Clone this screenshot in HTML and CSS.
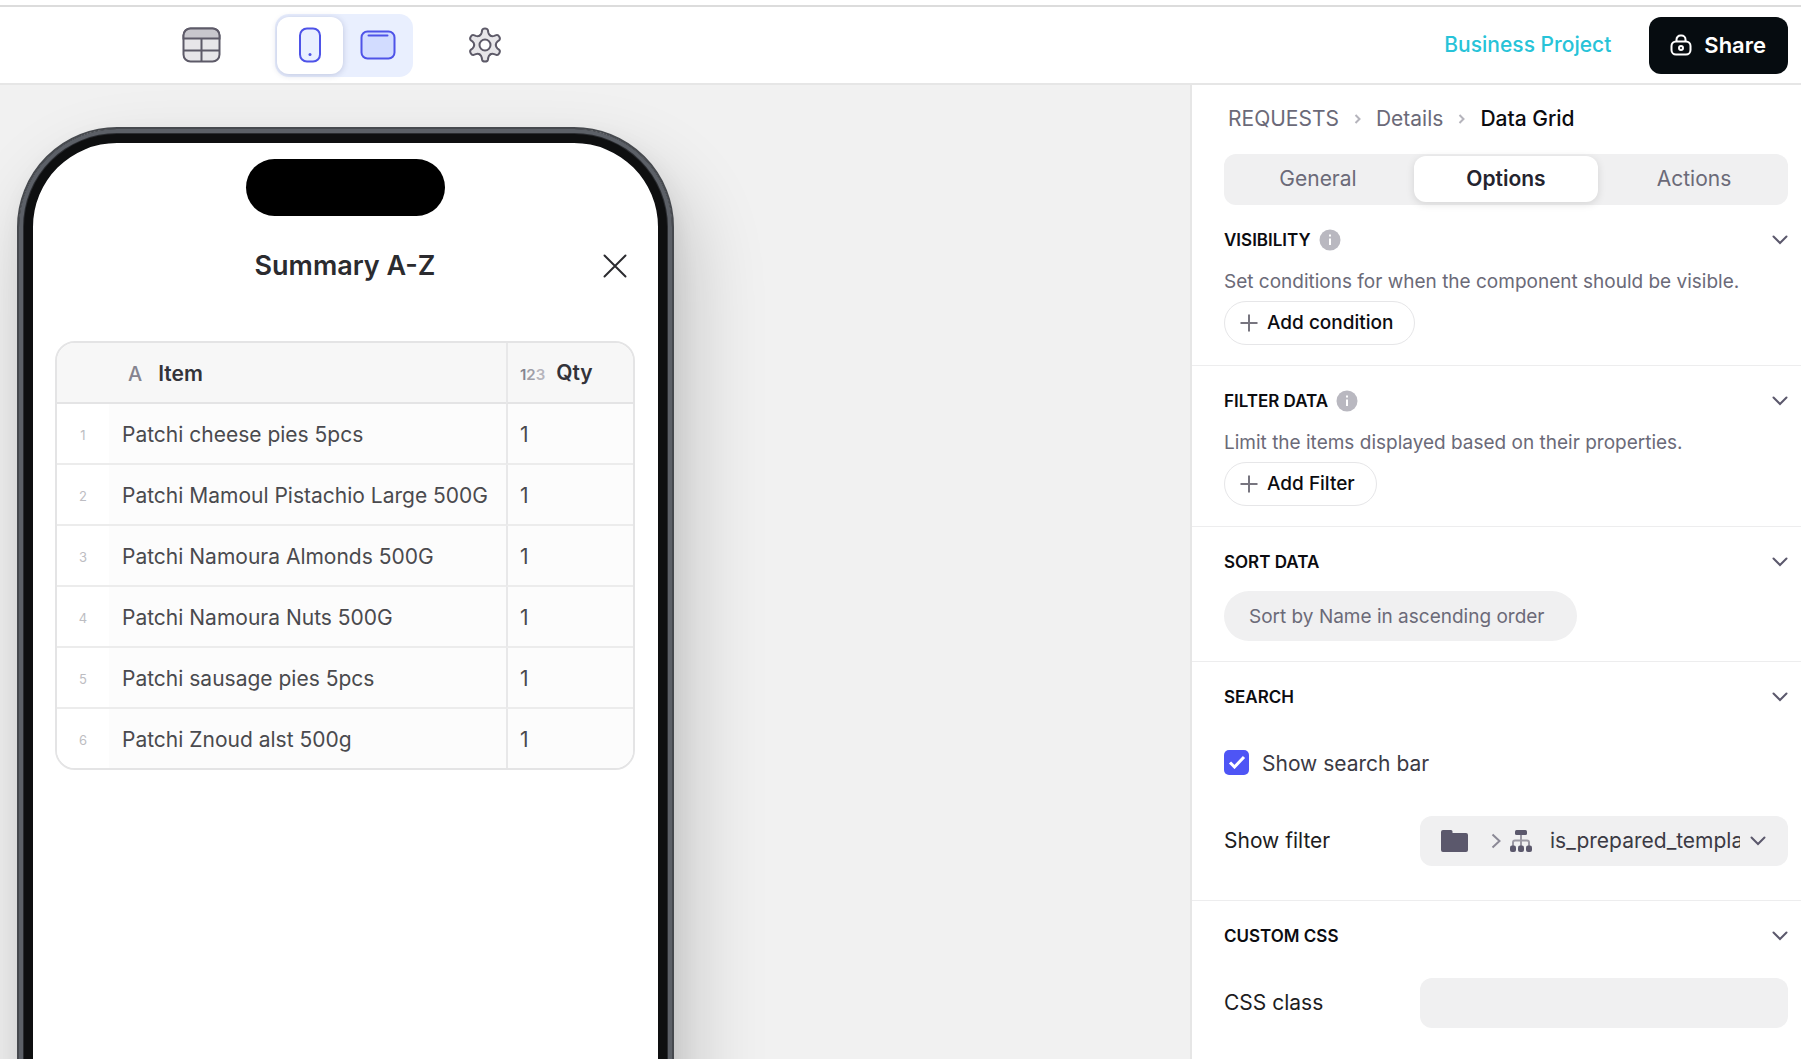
FILE: index.html
```html
<!DOCTYPE html>
<html lang="en">
<head>
  <meta charset="UTF-8">
  <title>Business Project</title>
  <link rel="stylesheet" href="styles.css">
</head>
<body>
  <header class="topbar">
    <div class="tools">
      <button class="icon-btn" aria-label="Data">
        <svg width="39" height="36" viewBox="0 0 39 36" fill="none" stroke="#5d5a68" stroke-width="2">
          <rect x="1.5" y="1.5" width="36" height="33" rx="7" fill="#e7e6e9"/>
          <path d="M1.5 11.5V8.500a7 7 0 0 1 7-7h22a7 7 0 0 1 7 7v3z" fill="#c8c7cd"/>
          <path d="M1.500 23.500h36M19.500 11.500v23"/>
        </svg>
      </button>
      <div class="devices">
        <button class="device active" aria-label="Phone">
          <svg width="22" height="36" viewBox="0 0 22 36" fill="none">
            <rect x="1" y="1.500" width="20" height="33" rx="7" fill="#e9efff" stroke="#4e53e8" stroke-width="2"/>
            <circle cx="11" cy="27.500" r="1.500" fill="#4e53e8"/>
          </svg>
        </button>
        <button class="device" aria-label="Tablet">
          <svg width="36" height="30" viewBox="0 0 36 30" fill="none" stroke="#4e53e8" stroke-width="2">
            <rect x="1.500" y="1.500" width="33" height="27" rx="6" fill="#d2dcff"/>
            <path d="M8.500 5.500h19" stroke-linecap="round"/>
          </svg>
        </button>
      </div>
      <button class="icon-btn" aria-label="Settings">
        <svg width="36" height="36" viewBox="-18 -18 36 36" fill="#e7e6e9" stroke="#5d5a68" stroke-width="2" stroke-linejoin="round" stroke-linecap="round">
          <circle r="10.500" stroke="none"/>
          <path id="tooth" d="M-5.400-9.350Q-3.800-10.200-3.300-12.500L-2.900-14.700Q-2.500-16.500 0-16.500T2.900-14.700L3.300-12.500Q3.800-10.200 5.400-9.350"/>
          <use href="#tooth" transform="rotate(60)"/>
          <use href="#tooth" transform="rotate(120)"/>
          <use href="#tooth" transform="rotate(180)"/>
          <use href="#tooth" transform="rotate(240)"/>
          <use href="#tooth" transform="rotate(300)"/>
          <circle r="5.500" fill="#fff"/>
        </svg>
      </button>
    </div>
    <div class="actions">
      <a class="project" href="#">Business Project</a>
      <button class="share">
        <svg width="22" height="22" viewBox="0 0 22 22" fill="none" stroke="#fff" stroke-width="2">
          <path d="M6.500 7.500V5.500a4 4 0 0 1 4-4h1a4 4 0 0 1 4 4v2"/>
          <rect x="1.500" y="7.500" width="19" height="13" rx="4.500"/>
          <circle cx="11" cy="14" r="2"/>
        </svg>
        Share
      </button>
    </div>
  </header>

  <div class="workspace">
    <main class="canvas">
      <div class="phone">
        <div class="island"></div>
        <div class="screen-head">
          <h1>Summary A-Z</h1>
          <button class="close" aria-label="Close">
            <svg width="24" height="24" viewBox="0 0 24 24" fill="none" stroke="#2b2b2f" stroke-width="2" stroke-linecap="round">
              <path d="M1.500 1.500l21 21M22.500 1.500l-21 21"/>
            </svg>
          </button>
        </div>
        <div class="grid-wrap">
          <table class="data-grid">
            <thead>
              <tr>
                <th class="num"></th>
                <th class="item"><span class="type type-text">A</span>Item</th>
                <th class="qty"><span class="type">1<span class="t2">2</span><span class="t3">3</span></span>Qty</th>
              </tr>
            </thead>
            <tbody>
              <tr><td class="num">1</td><td>Patchi cheese pies 5pcs</td><td class="qty">1</td></tr>
              <tr><td class="num">2</td><td>Patchi Mamoul Pistachio Large 500G</td><td class="qty">1</td></tr>
              <tr><td class="num">3</td><td>Patchi Namoura Almonds 500G</td><td class="qty">1</td></tr>
              <tr><td class="num">4</td><td>Patchi Namoura Nuts 500G</td><td class="qty">1</td></tr>
              <tr><td class="num">5</td><td>Patchi sausage pies 5pcs</td><td class="qty">1</td></tr>
              <tr><td class="num">6</td><td>Patchi Znoud alst 500g</td><td class="qty">1</td></tr>
            </tbody>
          </table>
        </div>
      </div>
    </main>

    <aside class="panel">
      <nav class="crumbs">
        <a href="#">REQUESTS</a>
        <svg width="7" height="10" viewBox="0 0 7 10"><path d="M1.500 1l4 4-4 4"/></svg>
        <a href="#">Details</a>
        <svg width="7" height="10" viewBox="0 0 7 10"><path d="M1.500 1l4 4-4 4"/></svg>
        <a class="current" href="#">Data Grid</a>
      </nav>
      <div class="tabs">
        <button>General</button>
        <button class="active">Options</button>
        <button>Actions</button>
      </div>

      <section>
        <div class="section-head">
          <h2>VISIBILITY</h2>
          <svg class="info" width="22" height="22" viewBox="0 0 22 22"><circle cx="11" cy="11" r="10.500" fill="#b9b8c0"/><path d="M11 9.500v6.500M11 5.500v2" stroke="#fff" stroke-width="2"/></svg>
          <button class="toggle" aria-label="Collapse"><svg width="16" height="10" viewBox="0 0 16 10"><path d="M1.500 1.500L8 8l6.500-6.500"/></svg></button>
        </div>
        <p>Set conditions for when the component should be visible.</p>
        <button class="add"><svg width="18" height="18" viewBox="0 0 18 18"><path d="M9 .5v17M.5 9h17"/></svg>Add condition</button>
      </section>

      <section>
        <div class="section-head">
          <h2>FILTER DATA</h2>
          <svg class="info" width="22" height="22" viewBox="0 0 22 22"><circle cx="11" cy="11" r="10.500" fill="#b9b8c0"/><path d="M11 9.500v6.500M11 5.500v2" stroke="#fff" stroke-width="2"/></svg>
          <button class="toggle" aria-label="Collapse"><svg width="16" height="10" viewBox="0 0 16 10"><path d="M1.500 1.500L8 8l6.500-6.500"/></svg></button>
        </div>
        <p>Limit the items displayed based on their properties.</p>
        <button class="add"><svg width="18" height="18" viewBox="0 0 18 18"><path d="M9 .5v17M.5 9h17"/></svg>Add Filter</button>
      </section>

      <section>
        <div class="section-head">
          <h2>SORT DATA</h2>
          <button class="toggle" aria-label="Collapse"><svg width="16" height="10" viewBox="0 0 16 10"><path d="M1.500 1.500L8 8l6.500-6.500"/></svg></button>
        </div>
        <button class="sort">Sort by Name in ascending order</button>
      </section>

      <section class="search">
        <div class="section-head">
          <h2>SEARCH</h2>
          <button class="toggle" aria-label="Collapse"><svg width="16" height="10" viewBox="0 0 16 10"><path d="M1.500 1.500L8 8l6.500-6.500"/></svg></button>
        </div>
        <div class="check">
          <span class="box">
            <input type="checkbox" id="searchBar" checked>
            <svg width="18" height="14" viewBox="0 0 18 14"><path d="M2 7.500l4.500 4.500L16 2"/></svg>
          </span>
          <label for="searchBar">Show search bar</label>
        </div>
        <div class="field">
          <label for="filter">Show filter</label>
          <div class="control select">
            <svg class="folder" width="27" height="22" viewBox="0 0 27 22" fill="#5b586c"><path d="M2 0h8q1.500 0 1.500 1.500V3H25q2 0 2 2v15q0 2-2 2H2q-2 0-2-2V2q0-2 2-2z"/></svg>
            <svg class="arrow" width="10" height="16" viewBox="0 0 10 16"><path d="M1.500 1.500L8.500 8l-7 6.500" fill="none" stroke="#8b8996" stroke-width="2"/></svg>
            <svg class="sitemap" width="22" height="22" viewBox="0 0 22 22" fill="#5b586c">
              <path d="M11 4v12M3 16v-3.500q0-2 2-2h12q2 0 2 2V16" fill="none" stroke="#9b99a4" stroke-width="2"/>
              <rect x="5" y="0" width="12" height="5" rx="1.500"/>
              <rect x="0" y="15.500" width="6" height="6.500" rx="2"/><rect x="8" y="15.500" width="6" height="6.500" rx="2"/><rect x="16" y="15.500" width="6" height="6.500" rx="2"/>
            </svg>
            <select id="filter"><option>is_prepared_template</option></select>
            <svg class="chev" width="16" height="10" viewBox="0 0 16 10"><path d="M1.500 1.500L8 8l6.500-6.500"/></svg>
          </div>
        </div>
      </section>

      <section>
        <div class="section-head">
          <h2>CUSTOM CSS</h2>
          <button class="toggle" aria-label="Collapse"><svg width="16" height="10" viewBox="0 0 16 10"><path d="M1.500 1.500L8 8l6.500-6.500"/></svg></button>
        </div>
        <div class="field css-field">
          <label for="cssClass">CSS class</label>
          <input class="control" type="text" id="cssClass">
        </div>
      </section>
    </aside>
  </div>
</body>
</html>
```

FILE: styles.css
```css
* { box-sizing: border-box; }
body {
  margin: 0;
  height: 100vh;
  padding-top: 5px;
  display: flex;
  flex-direction: column;
  overflow: hidden;
  background: #fff;
  font-family: Inter, "Liberation Sans", sans-serif;
  font-size: 21px;
  line-height: 24px;
  color: #1d1d22;
}
button, input, select { font: inherit; color: inherit; border: 0; margin: 0; padding: 0; background: none; }
button { cursor: pointer; }
a { text-decoration: none; color: inherit; }
svg { display: block; flex: none; }
h1, h2, p { margin: 0; }

/* top bar */
.topbar {
  flex: none;
  display: flex;
  justify-content: space-between;
  align-items: center;
  height: 80px;
  padding: 0 13px 0 182px;
  border-top: 2px solid #dcdcdc;
  border-bottom: 2px solid #e6e6e6;
}
.tools, .actions { display: flex; align-items: center; }
.tools { gap: 54px; }
.actions { gap: 38px; }
.devices {
  display: grid;
  grid-template-columns: 66px 66px;
  gap: 2px;
  padding: 3px 2px;
  background: #e9effe;
  border-radius: 14px;
}
.device { height: 57px; border-radius: 12px; display: grid; place-items: center; }
.device.active { background: #fff; box-shadow: 0 1px 6px rgba(40, 50, 110, .22); }
.project { color: #27c3d8; font-weight: 500; }
.share {
  display: flex;
  align-items: center;
  gap: 12px;
  height: 57px;
  padding: 0 22px 0 21px;
  border-radius: 12px;
  background: #060c10;
  color: #fff;
  font-size: 22px;
  font-weight: 600;
}

.workspace {
  flex: 1;
  min-height: 0;
  display: grid;
  grid-template-columns: 1fr 611px;
}

/* phone preview */
.canvas { overflow: hidden; padding: 42px 17px 0; background: #f1f1f1; }
.phone {
  width: 657px;
  height: 1350px;
  border: 2px solid #46494e;
  border-radius: 100px;
  background: #fff;
  box-shadow: inset 0 0 0 4px #5c6067, inset 0 0 0 5px #2a2c30, inset 0 0 0 14px #0e0f10, 14px 40px 80px rgba(0, 0, 0, .2), 4px 10px 24px rgba(0, 0, 0, .06);
  padding: 30px 37px 30px 36px;
}
.island { width: 199px; height: 57px; margin: 0 auto; border-radius: 29px; background: #000; }
.screen-head {
  display: grid;
  grid-template-columns: 32px 1fr 32px;
  align-items: center;
  margin-top: 33px;
}
.screen-head h1 {
  grid-column: 2;
  font-size: 27px;
  line-height: 34px;
  font-weight: 600;
  text-align: center;
  color: #2b2b2f;
}
.grid-wrap {
  margin-top: 58px;
  border: 2px solid #e4e4e5;
  border-radius: 20px;
  overflow: hidden;
}
.data-grid { width: 100%; border-collapse: separate; border-spacing: 0; table-layout: fixed; }
.data-grid th, .data-grid td { height: 61px; padding: 2px 0 0 13px; text-align: left; }
.data-grid th { background: #f7f7f7; color: #33333a; font-weight: 600; border-bottom: 2px solid #e4e4e5; }
.data-grid td { background: #fcfcfc; color: #4a4a4e; border-bottom: 2px solid #ececec; }
.data-grid tr:last-child td { height: 59px; border-bottom: 0; }
.data-grid .num { width: 52px; padding-left: 0; text-align: center; font-size: 13px; }
.data-grid td.num { background: #fff; color: #bdbdc2; }
.data-grid .qty { width: 127px; padding-left: 12px; border-left: 2px solid #e8e8e9; }
.data-grid tr:last-child th { border-bottom: 2px solid #e4e4e5; }
.type { margin-right: 11px; font-size: 15px; color: #85848f; }
.type-text { margin: 0 16px 0 6px; font-size: 20px; font-weight: 500; }
.t2 { color: #9f9ea7; }
.t3 { color: #b6b5bd; }

/* settings panel */
.panel { border-left: 2px solid #e6e6e6; background: #fff; overflow: hidden; }
.crumbs { display: flex; align-items: center; gap: 15px; padding: 22px 13px 0 36px; color: #6b6a78; }
.crumbs svg { fill: none; stroke: #b5b4bc; stroke-width: 2; }
.crumbs .current { color: #0c0c10; font-weight: 500; }
.tabs {
  display: grid;
  grid-template-columns: repeat(3, 1fr);
  gap: 4px;
  margin: 23px 13px 0 32px;
  padding: 2px 2px 3px;
  border-radius: 12px;
  background: #f0f0f1;
}
.tabs button { height: 46px; border-radius: 12px; color: #6b6a78; }
.tabs .active { background: #fff; color: #24232e; font-weight: 600; box-shadow: 0 2px 8px rgba(0, 0, 0, .12); }

section { padding: 23px 13px 20px 32px; border-bottom: 1px solid #ededee; }
section:last-child { border-bottom: 0; }
.section-head { display: flex; align-items: center; gap: 8px; height: 24px; }
.section-head h2 { font-size: 17px; line-height: 24px; font-weight: 600; color: #0c0c10; }
.toggle { margin-left: auto; }
.toggle path, .chev path { fill: none; stroke: #5b586c; stroke-width: 2; stroke-linecap: round; }
section p { margin-top: 17px; font-size: 19px; line-height: 26px; color: #6b6a78; }
.add {
  display: flex;
  align-items: center;
  gap: 9px;
  height: 44px;
  margin-top: 6px;
  padding: 0 21px 0 15px;
  border: 1px solid #e6e6e8;
  border-radius: 22px;
  font-size: 19px;
  font-weight: 500;
  color: #0c0c10;
}
.add path { stroke: #77757f; stroke-width: 2; }
.sort {
  display: block;
  height: 50px;
  margin-top: 17px;
  padding: 2px 32px 0 25px;
  border-radius: 25px;
  background: #f0f0f1;
  color: #6b6a78;
  font-size: 19px;
}
.check { display: flex; align-items: center; gap: 13px; margin-top: 40px; height: 26px; color: #3b3a44; }
.check label { padding-top: 3px; }
.box { display: grid; place-items: center; }
.box input, .box svg { grid-area: 1 / 1; }
.box input { appearance: none; width: 25px; height: 25px; border-radius: 5px; background: #4e55f5; }
.box svg { pointer-events: none; }
.box path { fill: none; stroke: #fff; stroke-width: 3; }
.search { padding-bottom: 34px; }
.field { display: grid; grid-template-columns: 1fr 368px; align-items: center; margin-top: 41px; }
.css-field { margin-top: 30px; }
.control { height: 50px; border-radius: 12px; background: #f0f0f1; }
.select { display: flex; align-items: center; padding: 0 22px 0 21px; }
.folder { margin-right: 23px; }
.arrow { margin-right: 9px; }
.sitemap { margin-right: 18px; }
.select select { flex: 1; min-width: 0; margin-right: 10px; appearance: none; color: #3b3a44; text-overflow: clip; }
```
